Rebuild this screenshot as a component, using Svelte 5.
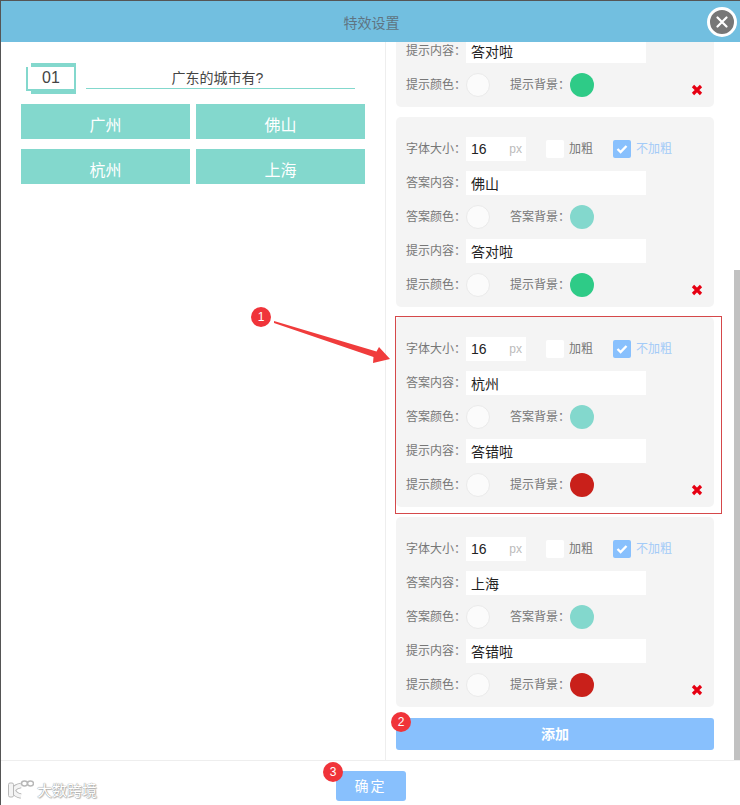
<script>
	import { onMount } from 'svelte';

	const cards = [
		{ answer: '广州', tip: '答对啦', tipBg: '#2ecb87' },
		{ answer: '佛山', tip: '答对啦', tipBg: '#2ecb87' },
		{ answer: '杭州', tip: '答错啦', tipBg: '#c9201a' },
		{ answer: '上海', tip: '答错啦', tipBg: '#c9201a' }
	];
	const options = ['广州', '佛山', '杭州', '上海'];

	let scroller;

	onMount(() => {
		scroller.scrollTop = scroller.scrollHeight;
	});
</script>

<div class="modal">
	<header class="head">
		<span>特效设置</span>
		<button class="close" aria-label="关闭">
			<svg width="12" height="12" viewBox="0 0 12 12">
				<path d="M1.5 1.5 L10.5 10.5 M10.5 1.5 L1.5 10.5" stroke="#fff" stroke-width="2.2" stroke-linecap="round" />
			</svg>
		</button>
	</header>

	<div class="body">
		<section class="preview">
			<div class="question">
				<div class="num"><span>01</span></div>
				<div class="title">广东的城市有?</div>
			</div>
			<div class="options">
				{#each options as opt}
					<div class="option">{opt}</div>
				{/each}
			</div>
		</section>

		<div class="settings-wrap">
			<section class="settings" bind:this={scroller}>
				{#each cards as card}
					<div class="card">
						<div class="row">
							<span class="label">字体大小：</span>
							<div class="size"><span>16</span><em>px</em></div>
							<span class="check"></span>
							<span class="check-text">加粗</span>
							<span class="check on">
								<svg width="12" height="10" viewBox="0 0 12 10">
									<path d="M1.5 5 L4.6 8 L10.5 2" fill="none" stroke="#fff" stroke-width="2.4" />
								</svg>
							</span>
							<span class="check-text on">不加粗</span>
						</div>
						<div class="row">
							<span class="label">答案内容：</span>
							<div class="text">{card.answer}</div>
						</div>
						<div class="row">
							<span class="label">答案颜色：</span>
							<span class="dot white"></span>
							<span class="label second">答案背景：</span>
							<span class="dot" style="background: #83d8cd"></span>
						</div>
						<div class="row">
							<span class="label">提示内容：</span>
							<div class="text">{card.tip}</div>
						</div>
						<div class="row">
							<span class="label">提示颜色：</span>
							<span class="dot white"></span>
							<span class="label second">提示背景：</span>
							<span class="dot" style="background: {card.tipBg}"></span>
							<svg class="del" width="12" height="12" viewBox="0 0 12 12">
								<path d="M2 2 L10 10 M10 2 L2 10" stroke="#e60012" stroke-width="3.2" />
							</svg>
						</div>
					</div>
				{/each}
				<button class="add">添加</button>
			</section>
			<div class="thumb"></div>
		</div>
	</div>

	<footer class="foot">
		<div class="mark">
			<svg width="28" height="20" viewBox="0 0 28 20">
				<path d="M15 5.5 C11 6 8.5 8 7 10 C8.5 13.5 11 15.5 15 16" fill="none" stroke="#b8b8b8" stroke-width="5.5" />
				<path d="M15 5.5 C11 6 8.5 8 7 10 C8.5 13.5 11 15.5 15 16" fill="none" stroke="#f4f4f4" stroke-width="3.5" />
				<rect x="2.5" y="3" width="5" height="14" rx="1.5" fill="#f4f4f4" stroke="#b8b8b8" stroke-width="1" />
				<ellipse cx="18.5" cy="3.5" rx="3" ry="2.4" fill="#fff" stroke="#b8b8b8" stroke-width="1.5" />
				<ellipse cx="24.5" cy="3.5" rx="3" ry="2.4" fill="#fff" stroke="#b8b8b8" stroke-width="1.5" />
			</svg>
			<span>大数跨境</span>
		</div>
		<button class="ok">确定</button>
	</footer>

	<!-- tutorial marks on top of the screenshot -->
	<div class="outline"></div>
	<svg class="arrow" width="130" height="50" viewBox="270 318 130 50">
		<polygon points="274,321 376.5,351.5 379,347 390,359 373,363 373.5,357 274,323" fill="#f03c3c" />
	</svg>
	<span class="badge one">1</span>
	<span class="badge two">2</span>
	<span class="badge three">3</span>
</div>

<style>
	:global(body) {
		margin: 0;
		background: #fff;
	}

	.modal {
		position: relative;
		width: 740px;
		height: 805px;
		box-sizing: border-box;
		border-top: 1px solid #555;
		border-left: 1px solid #555;
		background: #fff;
		display: flex;
		flex-direction: column;
		overflow: hidden;
		font-family: 'Liberation Sans', 'Noto Sans CJK SC', sans-serif;
		color: #666;
	}

	button {
		font-family: inherit;
		border: none;
		cursor: pointer;
		padding: 0;
	}

	.head {
		height: 41px;
		flex: none;
		box-sizing: border-box;
		padding-left: 2px;
		background: #72bfe0;
		display: flex;
		align-items: center;
		justify-content: center;
		font-size: 14px;
		color: #5f7482;
		position: relative;
	}

	.close {
		position: absolute;
		top: 6px;
		right: 3px;
		width: 30px;
		height: 30px;
		box-sizing: border-box;
		border-radius: 50%;
		border: 3px solid #fff;
		background: #777;
		display: flex;
		align-items: center;
		justify-content: center;
	}

	.body {
		flex: 1;
		min-height: 0;
		display: flex;
	}

	.preview {
		width: 385px;
		flex: none;
		box-sizing: border-box;
		padding: 21px 20px 0;
		border-right: 1px solid #eee;
	}

	.question {
		display: flex;
		align-items: flex-end;
		height: 31px;
		padding-left: 5px;
		margin-bottom: 10px;
	}

	.num {
		position: relative;
		width: 48px;
		height: 24px;
		box-sizing: border-box;
		border-style: solid;
		border-color: #83d8cd;
		border-width: 0 0 2px 2px;
		background: #fff;
		margin-bottom: 3px;
		display: flex;
		align-items: center;
		justify-content: center;
		font-size: 16px;
		color: #444;
	}

	.num::before {
		content: '';
		position: absolute;
		left: 3px;
		top: -4px;
		width: 45px;
		height: 31px;
		background: #83d8cd;
		z-index: 0;
	}

	.num::after {
		content: '';
		position: absolute;
		inset: 0;
		background: #fff;
		z-index: 0;
	}

	.num span {
		position: relative;
		z-index: 1;
	}

	.title {
		width: 269px;
		margin-left: 12px;
		margin-bottom: 5px;
		box-sizing: border-box;
		padding-right: 6px;
		border-bottom: 1px solid #83d8cd;
		text-align: center;
		font-size: 14px;
		line-height: 20px;
		color: #444;
	}

	.options {
		display: grid;
		grid-template-columns: 169px 169px;
		column-gap: 6px;
		row-gap: 10px;
	}

	.option {
		height: 35px;
		box-sizing: border-box;
		padding-top: 9px;
		background: #83d8cd;
		color: #fff;
		font-size: 16px;
		line-height: 26px;
		text-align: center;
	}

	.settings-wrap {
		flex: 1;
		min-width: 0;
		position: relative;
	}

	.settings {
		height: 100%;
		overflow-y: auto;
		scrollbar-width: none;
		box-sizing: border-box;
		padding: 10px 26px 10px 10px;
	}

	.thumb {
		position: absolute;
		right: 0;
		bottom: 0;
		width: 6px;
		height: 490px;
		background: #c1c1c1;
	}

	.card {
		background: #f4f4f4;
		border-radius: 5px;
		padding: 20px 10px 10px;
		margin-bottom: 10px;
		display: flex;
		flex-direction: column;
		gap: 10px;
	}

	.card:last-of-type {
		margin-bottom: 11px;
	}

	.row {
		display: flex;
		align-items: center;
		height: 24px;
	}

	.label {
		width: 60px;
		flex: none;
		padding-bottom: 3px;
		font-size: 12px;
		color: #777;
		white-space: nowrap;
	}

	.label.second {
		margin-left: 20px;
	}

	.size {
		width: 60px;
		height: 24px;
		box-sizing: border-box;
		padding: 0 4px 0 5px;
		background: #fff;
		display: flex;
		align-items: center;
		justify-content: space-between;
		font-size: 14px;
		color: #222;
	}

	.size em {
		font-style: normal;
		font-size: 12px;
		color: #bbb;
	}

	.text {
		width: 180px;
		height: 24px;
		box-sizing: border-box;
		padding-left: 5px;
		background: #fff;
		font-size: 14px;
		line-height: 26px;
		color: #222;
	}

	.check {
		width: 18px;
		height: 18px;
		flex: none;
		margin-left: 20px;
		border-radius: 2px;
		background: #fff;
		display: flex;
		align-items: center;
		justify-content: center;
	}

	.check.on {
		background: #88c0fd;
	}

	.check-text {
		margin-left: 5px;
		padding-bottom: 3px;
		font-size: 12px;
		color: #777;
	}

	.check-text.on {
		color: #a3cbf8;
	}

	.dot {
		width: 24px;
		height: 24px;
		flex: none;
		border-radius: 50%;
	}

	.dot.white {
		box-sizing: border-box;
		border: 1px solid #eaeaea;
		background: #fbfbfb;
	}

	.del {
		margin-left: auto;
		margin-right: 1px;
		align-self: flex-end;
		margin-bottom: 1px;
	}

	.add {
		display: block;
		width: 100%;
		height: 32px;
		padding-bottom: 2px;
		border-radius: 3px;
		background: #88c0fd;
		color: #fff;
		font-size: 14px;
		font-weight: bold;
	}

	.foot {
		height: 45px;
		flex: none;
		box-sizing: border-box;
		border-top: 1px solid #eee;
		display: flex;
		justify-content: center;
		padding-top: 10px;
		position: relative;
	}

	.ok {
		width: 70px;
		height: 30px;
		padding-bottom: 2px;
		border-radius: 3px;
		background: #88c0fd;
		color: #fff;
		font-size: 14px;
		letter-spacing: 2px;
	}

	.mark {
		position: absolute;
		left: 5px;
		bottom: 5px;
		display: flex;
		align-items: center;
		gap: 3px;
		font-size: 15px;
		color: #fff;
		text-shadow: 0 0 1px #999, 0 0 1px #999, 1px 1px 1px #bbb;
	}

	.outline {
		position: absolute;
		left: 394px;
		top: 315px;
		width: 327px;
		height: 198px;
		box-sizing: border-box;
		border: 1px solid #d5484a;
		pointer-events: none;
	}

	.arrow {
		position: absolute;
		left: 269px;
		top: 317px;
	}

	.badge {
		position: absolute;
		width: 20px;
		height: 20px;
		border-radius: 50%;
		background: #f0343a;
		color: #fff;
		font-size: 12px;
		line-height: 20px;
		text-align: center;
	}

	.one {
		left: 250px;
		top: 306px;
	}

	.two {
		left: 390px;
		top: 711px;
	}

	.three {
		left: 322px;
		top: 761px;
	}
</style>
